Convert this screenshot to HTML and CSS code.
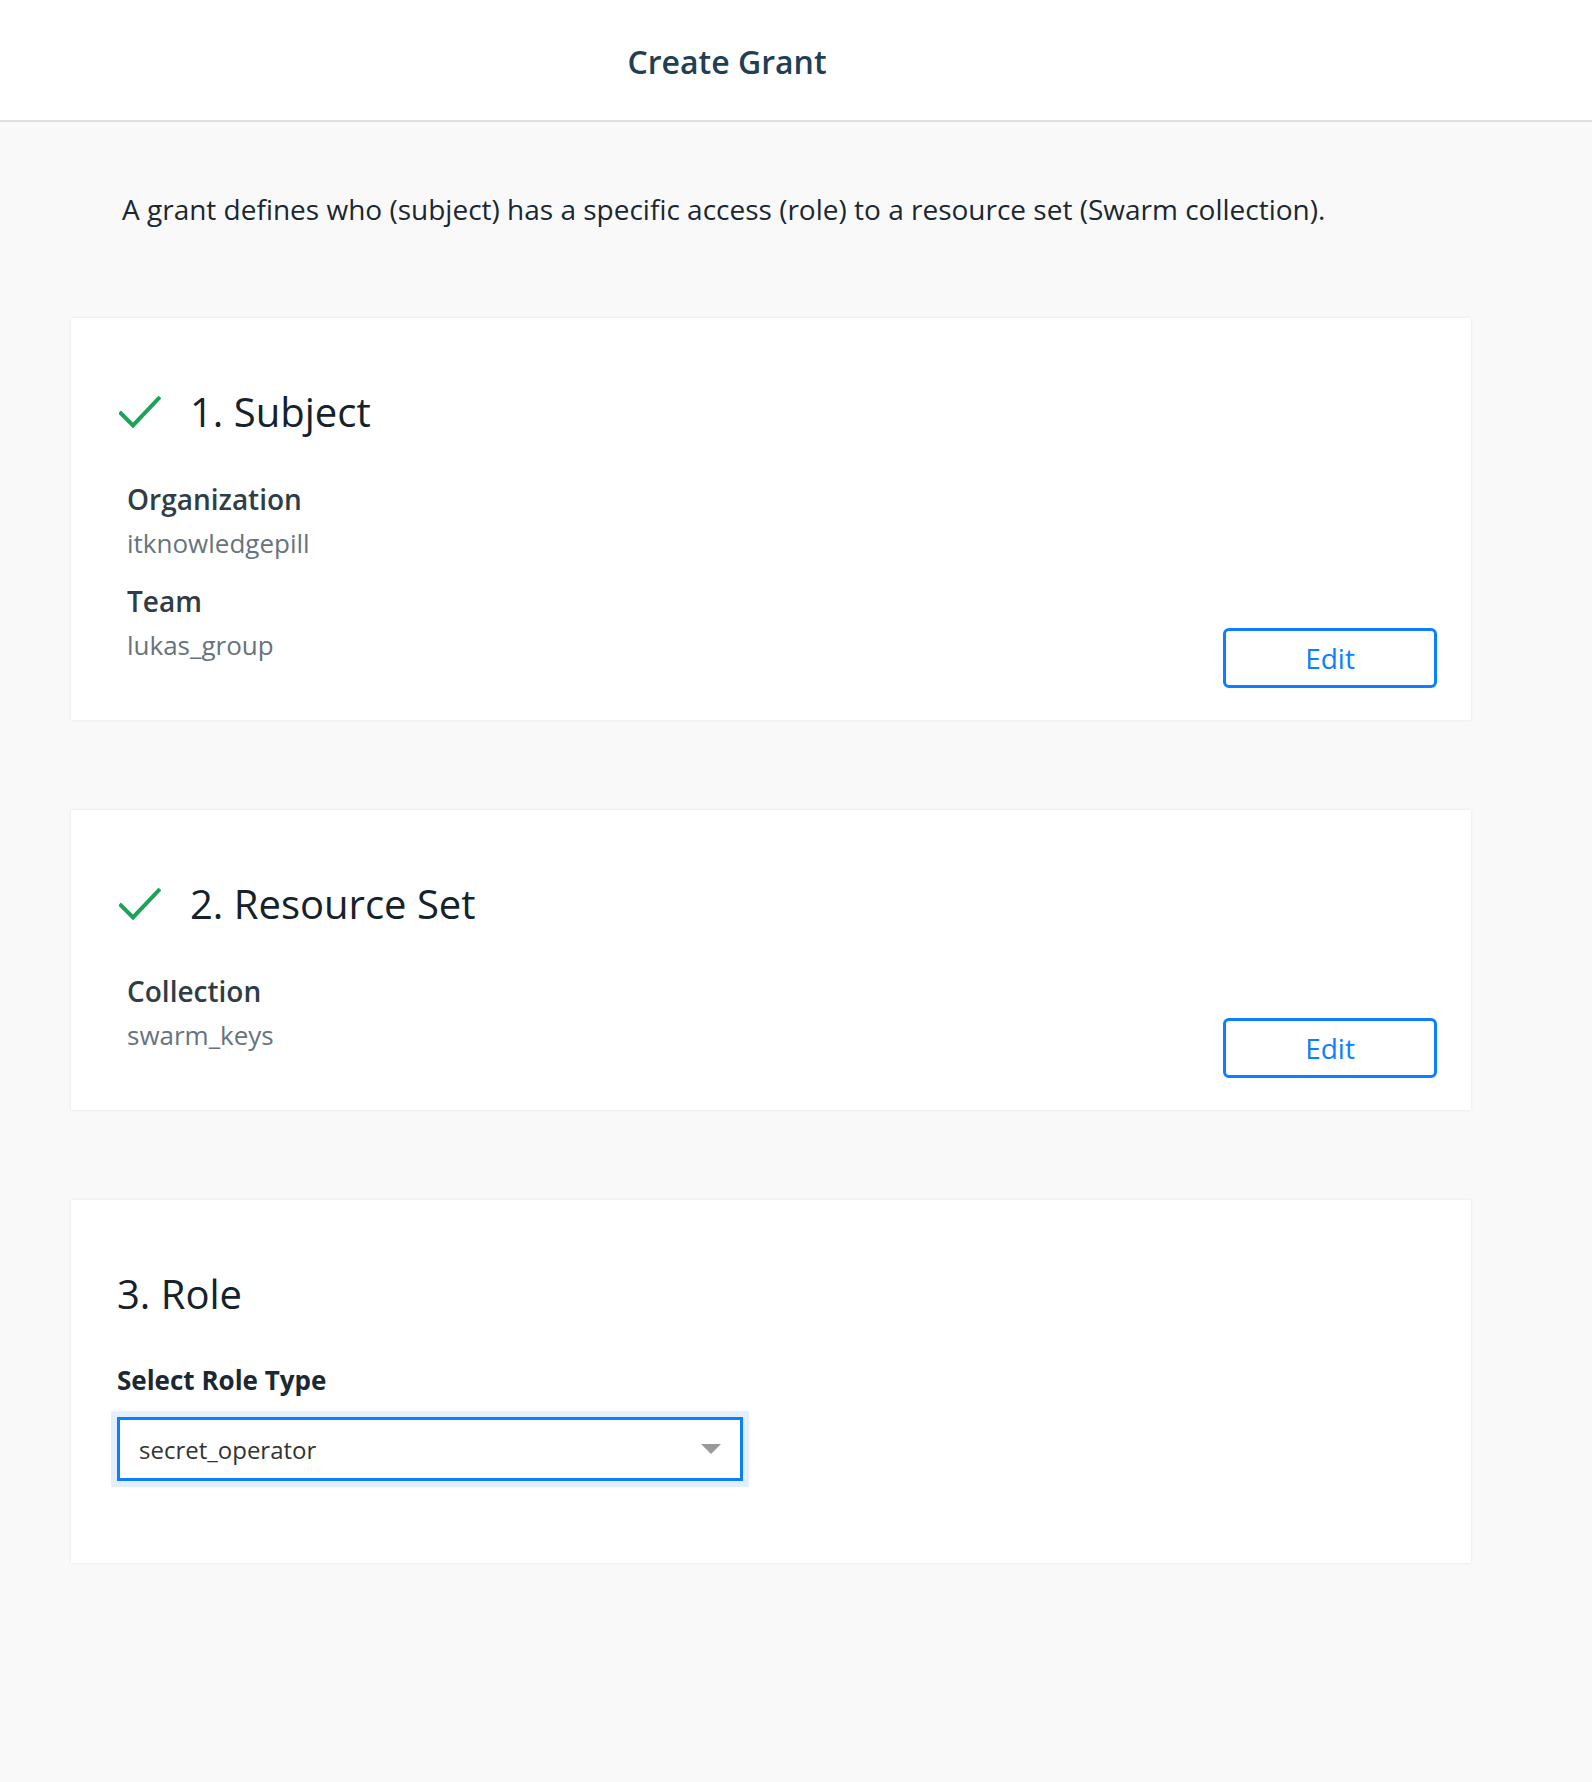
FILE: index.html
```html
<!DOCTYPE html>
<html lang="en">
<head>
<meta charset="utf-8">
<title>Create Grant</title>
<link rel="stylesheet" href="styles.css">
</head>
<body>
<header class="topbar">
  <h1 class="title">Create Grant</h1>
</header>
<main class="content">
  <p class="intro">A grant defines who (subject) has a specific access (role) to a resource set (Swarm collection).</p>

  <section class="card">
    <div class="card-head">
      <svg class="check" viewBox="0 0 42 32" aria-hidden="true"><polyline points="0.5,16 14,29.5 41,1" /></svg>
      <h2 class="card-title">1. Subject</h2>
    </div>
    <div class="card-body">
      <dl class="fields">
        <div class="field"><dt>Organization</dt><dd>itknowledgepill</dd></div>
        <div class="field"><dt>Team</dt><dd>lukas_group</dd></div>
      </dl>
      <button class="btn-edit" type="button">Edit</button>
    </div>
  </section>

  <section class="card">
    <div class="card-head">
      <svg class="check" viewBox="0 0 42 32" aria-hidden="true"><polyline points="0.5,16 14,29.5 41,1" /></svg>
      <h2 class="card-title">2. Resource Set</h2>
    </div>
    <div class="card-body">
      <dl class="fields">
        <div class="field"><dt>Collection</dt><dd>swarm_keys</dd></div>
      </dl>
      <button class="btn-edit" type="button">Edit</button>
    </div>
  </section>

  <section class="card card-role">
    <div class="card-head">
      <h2 class="card-title">3. Role</h2>
    </div>
    <div class="role-label">Select Role Type</div>
    <div class="select">
      <span class="select-value">secret_operator</span>
      <span class="select-arrow"></span>
    </div>
  </section>
</main>
</body>
</html>
```

FILE: styles.css
```css
html, body {
  margin: 0;
  padding: 0;
}

body {
  background: #f9f9f9;
  font-family: "Open Sans", "Noto Sans", sans-serif;
  min-height: 1782px;
}

.topbar {
  height: 120px;
  background: #ffffff;
  border-bottom: 2px solid #dde1e5;
  display: flex;
  justify-content: center;
  padding-right: 138px;
}

.title {
  margin: 0;
  padding-top: 40px;
  font-size: 32px;
  font-weight: 600;
  line-height: 44px;
  color: #203e54;
}

.content {
  width: 1400px;
  padding: 69px 0 0 71px;
}

.intro {
  margin: 0 0 91px;
  padding-left: 51px;
  font-size: 28px;
  line-height: 36px;
  color: #1b2731;
}

.card {
  background: #ffffff;
  box-shadow: 0 0 3px rgba(0, 0, 0, 0.09);
  padding: 70px 34px 32px 46px;
  margin-bottom: 90px;
}

.card-head {
  display: flex;
  align-items: center;
  gap: 29px;
  height: 48px;
}

.check {
  width: 42px;
  height: 32px;
  flex: none;
  margin-left: 2px;
}

.check polyline {
  fill: none;
  stroke: #1ba35a;
  stroke-width: 4;
}

.card-title {
  margin: 0;
  font-size: 40px;
  font-weight: 400;
  line-height: 48px;
  color: #15222c;
}

.card-body {
  display: flex;
  justify-content: space-between;
  align-items: flex-end;
  margin-top: 45px;
}

.fields {
  margin: 0 0 25px 10px;
}

.field + .field {
  margin-top: 22px;
}

.fields dt {
  font-size: 28px;
  font-weight: 600;
  line-height: 36px;
  color: #2f3d48;
}

.fields dd {
  margin: 8px 0 0;
  font-size: 26px;
  line-height: 36px;
  color: #67737d;
}

.btn-edit {
  width: 214px;
  height: 60px;
  box-sizing: border-box;
  border: 3px solid #0b7fff;
  border-radius: 6px;
  background: #ffffff;
  color: #0b7fff;
  font-family: "Open Sans", sans-serif;
  font-size: 28px;
  line-height: 36px;
  padding: 0;
  cursor: pointer;
}

.card-role {
  padding-bottom: 82px;
}

.role-label {
  margin-top: 46px;
  font-size: 26px;
  font-weight: 700;
  line-height: 32px;
  color: #1b2733;
}

.select {
  margin-top: 21px;
  width: 626px;
  height: 64px;
  box-sizing: border-box;
  border: 3px solid #0b7fff;
  box-shadow: 0 0 0 6px #e3effc;
  background: #ffffff;
  display: flex;
  align-items: center;
  justify-content: space-between;
  padding: 0 19px 0 19px;
}

.select-value {
  font-size: 24px;
  color: #333333;
}

.select-arrow {
  width: 0;
  height: 0;
  border-left: 10px solid transparent;
  border-right: 10px solid transparent;
  border-top: 10px solid #999999;
}
```
